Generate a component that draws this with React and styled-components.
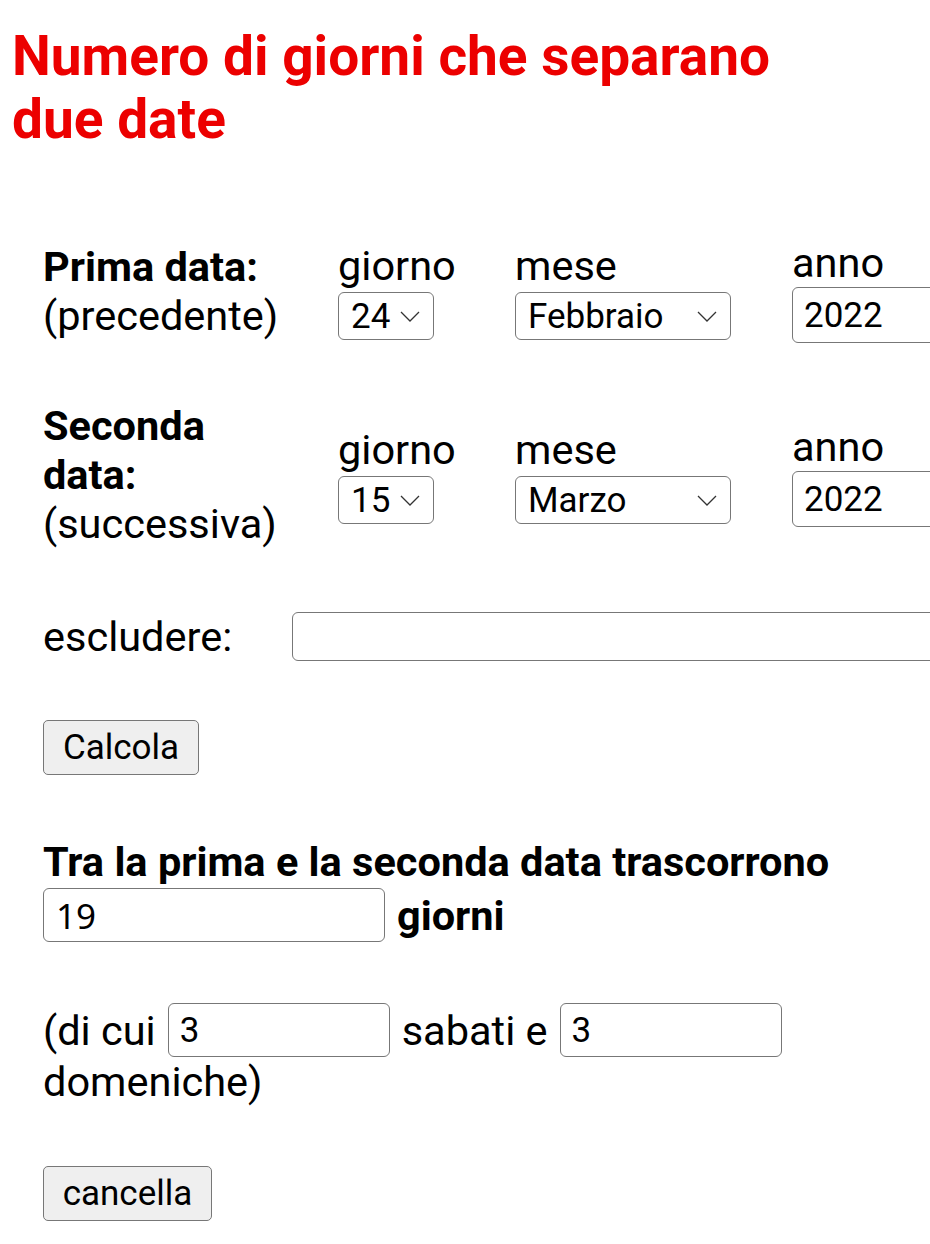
import React from "react";
import styled, { createGlobalStyle } from "styled-components";

const GlobalStyle = createGlobalStyle`
  html, body {
    margin: 0;
    padding: 0;
    background: #ffffff;
    overflow-x: hidden;
  }
  body {
    font-family: Roboto, "Liberation Sans", sans-serif;
    font-size: 41.5px;
    color: #000;
  }
`;

const Page = styled.div`
  padding: 25px 0 40px 0;
  width: 930px;
  overflow: hidden;
`;

const Title = styled.h1`
  margin: 0 0 0 12px;
  font-size: 55px;
  line-height: 63px;
  font-weight: 700;
  color: #ec0000;
`;

const Form = styled.div`
  padding-left: 43px;
  margin-top: 87px;
`;

const DateRow = styled.div`
  display: grid;
  grid-template-columns: 295px 177px 277px 400px;
  align-items: center;
  margin-top: ${(p) => p.$top || 0}px;
`;

const RowLabel = styled.div`
  line-height: normal;
`;

const Strong = styled.span`
  font-weight: 700;
`;

const Field = styled.div`
  display: flex;
  flex-direction: column;
  align-items: flex-start;
  gap: ${(p) => p.$gap}px;
`;

const FieldLabel = styled.div`
  line-height: normal;
`;

const SelectBox = styled.div`
  box-sizing: border-box;
  width: ${(p) => p.$w}px;
  height: 48px;
  border: 1.5px solid #777;
  border-radius: 6px;
  display: flex;
  align-items: center;
  justify-content: space-between;
  padding: 0 13px 0 12px;
  font-size: 35px;
  background: #fff;
`;

const Chevron = () => (
  <svg width="20" height="11" viewBox="0 0 20 11" fill="none">
    <path d="M1 1 L10 10 L19 1" stroke="#333" strokeWidth="1.3" />
  </svg>
);

const TextBox = styled.div`
  box-sizing: border-box;
  flex: none;
  width: ${(p) => p.$w}px;
  height: ${(p) => p.$h}px;
  border: 1.5px solid #777;
  border-radius: 6px;
  display: flex;
  align-items: center;
  padding-left: ${(p) => p.$pad || 11}px;
  font-size: 35px;
  font-family: ${(p) => p.$font || "Roboto"}, sans-serif;
  background: #fff;
`;

const ExcludeRow = styled.div`
  display: flex;
  align-items: center;
  margin-top: 64px;
`;

const ExcludeLabel = styled.div`
  width: 249px;
  flex: none;
  line-height: normal;
`;

const Button = styled.div`
  box-sizing: border-box;
  width: ${(p) => p.$w}px;
  height: 55px;
  margin-top: ${(p) => p.$top}px;
  border: 1.5px solid #777;
  border-radius: 5px;
  background: #efefef;
  font-size: 35px;
  display: flex;
  align-items: center;
  justify-content: center;
`;

const ResultLine = styled.div`
  font-weight: 700;
  line-height: normal;
  margin-top: 62px;
`;

const InlineRow = styled.div`
  display: flex;
  flex-wrap: wrap;
  align-items: center;
  column-gap: 12px;
  row-gap: 0;
  margin-top: ${(p) => p.$top}px;
  line-height: normal;
  width: 887px;
`;

export default function App() {
  return (
    <>
      <GlobalStyle />
      <Page>
        <Title>
          Numero di giorni che separano
          <br />
          due date
        </Title>
        <Form>
          <DateRow>
            <RowLabel>
              <Strong>Prima data:</Strong>
              <br />
              (precedente)
            </RowLabel>
            <Field $gap={2}>
              <FieldLabel>giorno</FieldLabel>
              <SelectBox $w={96}>
                <span>24</span>
                <Chevron />
              </SelectBox>
            </Field>
            <Field $gap={2}>
              <FieldLabel>mese</FieldLabel>
              <SelectBox $w={216}>
                <span>Febbraio</span>
                <Chevron />
              </SelectBox>
            </Field>
            <Field $gap={0}>
              <FieldLabel>anno</FieldLabel>
              <TextBox $w={300} $h={56}>2022</TextBox>
            </Field>
          </DateRow>
          <DateRow $top={58}>
            <RowLabel>
              <Strong>
                Seconda
                <br />
                data:
              </Strong>
              <br />
              (successiva)
            </RowLabel>
            <Field $gap={2}>
              <FieldLabel>giorno</FieldLabel>
              <SelectBox $w={96}>
                <span>15</span>
                <Chevron />
              </SelectBox>
            </Field>
            <Field $gap={2}>
              <FieldLabel>mese</FieldLabel>
              <SelectBox $w={216}>
                <span>Marzo</span>
                <Chevron />
              </SelectBox>
            </Field>
            <Field $gap={0}>
              <FieldLabel>anno</FieldLabel>
              <TextBox $w={300} $h={56}>2022</TextBox>
            </Field>
          </DateRow>
          <ExcludeRow>
            <ExcludeLabel>escludere:</ExcludeLabel>
            <TextBox $w={700} $h={49} />
          </ExcludeRow>
          <Button $w={156} $top={59}>Calcola</Button>
          <ResultLine>Tra la prima e la seconda data trascorrono</ResultLine>
          <InlineRow $top={2}>
            <TextBox $w={342} $h={54} $pad={12} $font={'"Noto Sans"'}>19</TextBox>
            <Strong>giorni</Strong>
          </InlineRow>
          <InlineRow $top={61}>
            <span>(di cui</span>
            <TextBox $w={222} $h={54}>3</TextBox>
            <span>sabati e</span>
            <TextBox $w={222} $h={54}>3</TextBox>
            <span>domeniche)</span>
          </InlineRow>
          <Button $w={169} $top={60}>cancella</Button>
        </Form>
      </Page>
    </>
  );
}
